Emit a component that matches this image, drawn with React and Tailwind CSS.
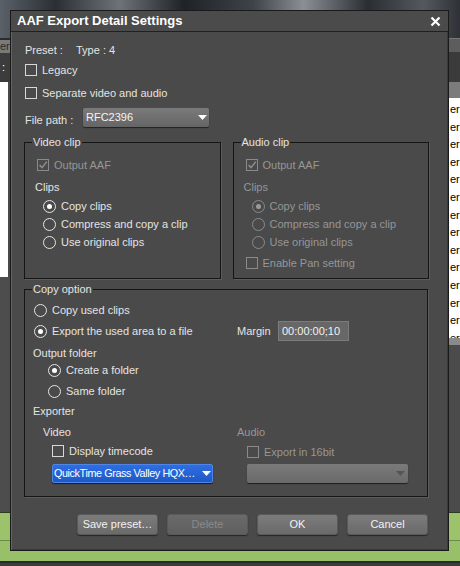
import React from 'react';

const TXT = 'text-[#e4e4e4]';
const DIM = 'text-[#969696]';

function Check({ checked, disabled }) {
  const c = disabled ? '#8e8e8e' : '#dcdcdc';
  return (
    <span
      className={`w-[12px] h-[12px] shrink-0 border flex items-center justify-center ${
        disabled ? 'border-[#8a8a8a]' : 'border-[#d8d8d8]'
      }`}
    >
      {checked && (
        <svg width="10" height="10" viewBox="0 0 10 10">
          <path d="M1.6 5 L4 7.6 L8.8 1.6" fill="none" stroke={c} strokeWidth="1.5" />
        </svg>
      )}
    </span>
  );
}

function Radio({ on, disabled }) {
  return (
    <span
      className={`w-[13px] h-[13px] shrink-0 rounded-full border flex items-center justify-center ${
        disabled ? 'border-[#8a8a8a]' : 'border-[#e6e6e6]'
      }`}
    >
      {on && <span className={`w-[5px] h-[5px] rounded-full ${disabled ? 'bg-[#9a9a9a]' : 'bg-white'}`} />}
    </span>
  );
}

function CheckRow({ label, checked, disabled, className = '' }) {
  return (
    <div className={`h-[16px] flex items-center gap-[5px] ${className}`}>
      <Check checked={checked} disabled={disabled} />
      <span className={disabled ? DIM : TXT}>{label}</span>
    </div>
  );
}

function RadioRow({ label, on, disabled, className = '' }) {
  return (
    <div className={`h-[16px] flex items-center gap-[5px] ${className}`}>
      <Radio on={on} disabled={disabled} />
      <span className={disabled ? DIM : TXT}>{label}</span>
    </div>
  );
}

function Arrow({ color = '#ffffff' }) {
  return (
    <svg width="9" height="5" viewBox="0 0 9 5" className="shrink-0">
      <path d="M0 0 H9 L4.5 5 Z" fill={color} />
    </svg>
  );
}

function Group({ title, className = '', children }) {
  return (
    <fieldset className={`border border-[#151515] shadow-[1px_1px_0_#5c5c5c] pl-[7px] ${className}`}>
      <legend className="px-[1px] leading-[14px] text-[#e4e4e4]">{title}</legend>
      {children}
    </fieldset>
  );
}

function ClipGroup({ title, disabled, pan }) {
  return (
    <Group title={title} className="w-[197px] h-[144px]">
      <CheckRow label="Output AAF" checked disabled className="mt-[8px] ml-[5px]" />
      <div className={`h-[16px] mt-[6px] ml-[3px] flex items-center ${disabled ? DIM : TXT}`}>Clips</div>
      <RadioRow label="Copy clips" on disabled={disabled} className="mt-[3px] ml-[11px]" />
      <RadioRow label="Compress and copy a clip" disabled={disabled} className="mt-[2px] ml-[11px]" />
      <RadioRow label="Use original clips" disabled={disabled} className="mt-[2px] ml-[11px]" />
      {pan && <CheckRow label="Enable Pan setting" disabled className="mt-[5px] ml-[5px]" />}
    </Group>
  );
}

function Btn({ children, disabled }) {
  return (
    <button
      className={`w-[81px] h-[21px] rounded-[3px] border border-[#5a5a5a] shadow-[0_1px_1px_#252525] ${
        disabled
          ? 'bg-[linear-gradient(#6a6a6a,#5f5f5f)] text-[#8a8a8a]'
          : 'bg-[linear-gradient(#7c7c7c,#6a6a6a)] text-[#f2f2f2]'
      }`}
    >
      {children}
    </button>
  );
}

function Dialog() {
  return (
    <div className="absolute left-[10px] top-[10px] w-[439px] h-[541px] bg-[#4a4a4a] border border-[#1a1a1a] shadow-[inset_1px_1px_0_#656565,inset_-1px_-1px_0_#3a3a3a] flex flex-col text-[11px]">
      <div className="h-[21px] shrink-0 flex items-center justify-between pl-[6px] pr-[7px] border-b border-[#202020] bg-[#4b4b4b]">
        <span className="text-white font-bold text-[13px]">AAF Export Detail Settings</span>
        <svg width="11" height="11" viewBox="0 0 11 11">
          <path d="M1.5 1.5 L9.5 9.5 M9.5 1.5 L1.5 9.5" stroke="#ffffff" strokeWidth="2.2" />
        </svg>
      </div>

      <div className="pl-[13px] pr-[19px] flex flex-col">
        <div className={`h-[16px] mt-[10px] ml-[1px] flex items-center ${TXT}`}>
          <span className="w-[51px]">Preset :</span>
          <span>Type : 4</span>
        </div>
        <CheckRow label="Legacy" className="mt-[4px] ml-[1px]" />
        <CheckRow label="Separate video and audio" className="mt-[7px] ml-[1px]" />

        <div className="h-[19px] mt-[7px] ml-[1px] flex items-center">
          <span className={`w-[58px] pt-[5px] ${TXT}`}>File path :</span>
          <div className="w-[126px] h-[19px] rounded-[2px] bg-[linear-gradient(#7a7a7a,#656565)] shadow-[0_1px_1px_#222] flex items-center justify-between pl-[3px] pr-[2px] text-[#f4f4f4]">
            <span>RFC2396</span>
            <Arrow />
          </div>
        </div>

        <div className="mt-[8px] flex gap-[12px]">
          <ClipGroup title="Video clip" />
          <ClipGroup title="Audio clip" disabled pan />
        </div>

        <Group title="Copy option" className="mt-[3px] w-[404px] h-[215px]">
          <RadioRow label="Copy used clips" className="mt-[6px] ml-[2px]" />
          <div className="h-[20px] mt-[3px] flex items-center">
            <RadioRow label="Export the used area to a file" on className="ml-[2px] w-[203px]" />
            <span className={`w-[41px] ${TXT}`}>Margin</span>
            <div className="w-[71px] h-[20px] bg-[#676767] border border-[#7c7c7c] flex items-center pl-[3px] text-[#f2f2f2]">
              00:00:00;10
            </div>
          </div>
          <div className={`h-[16px] mt-[4px] ml-[1px] flex items-center ${TXT}`}>Output folder</div>
          <RadioRow label="Create a folder" on className="mt-[1px] ml-[16px]" />
          <RadioRow label="Same folder" className="mt-[5px] ml-[16px]" />
          <div className={`h-[16px] mt-[4px] ml-[1px] flex items-center ${TXT}`}>Exporter</div>

          <div className="mt-[5px] ml-[11px] flex">
            <div className="w-[194px] flex flex-col">
              <div className={`h-[16px] flex items-center ${TXT}`}>Video</div>
              <CheckRow label="Display timecode" className="mt-[3px] ml-[9px]" />
              <div className="mt-[5px] ml-[9px] w-[161px] h-[19px] rounded-[2px] bg-[linear-gradient(#2f6ee0,#1e58c8)] border border-[#4f86e6] shadow-[0_1px_1px_#1a1a1a] flex items-center justify-between gap-[2px] pl-[1px] pr-[1px] text-white">
                <span className="whitespace-nowrap text-[10.8px] tracking-[-0.4px]">QuickTime Grass Valley HQX…</span>
                <Arrow />
              </div>
            </div>
            <div className="flex flex-col">
              <div className={`h-[16px] flex items-center ${DIM}`}>Audio</div>
              <CheckRow label="Export in 16bit" disabled className="mt-[4px] ml-[10px]" />
              <div className="mt-[4px] ml-[10px] w-[161px] h-[19px] rounded-[2px] bg-[linear-gradient(#7a7a7a,#6a6a6a)] shadow-[0_1px_1px_#1f1f1f] flex items-center justify-end pr-[3px]">
                <Arrow color="#555555" />
              </div>
            </div>
          </div>
        </Group>

        <div className="mt-[17px] flex justify-end gap-[9px] pr-[1px]">
          <Btn>Save preset…</Btn>
          <Btn disabled>Delete</Btn>
          <Btn>OK</Btn>
          <Btn>Cancel</Btn>
        </div>
      </div>
    </div>
  );
}

export default function App() {
  const rows = Array.from({ length: 14 });
  return (
    <div className="relative w-[460px] h-[566px] overflow-hidden bg-[#4a4a4a] flex flex-col font-['Liberation_Sans',Arial,sans-serif]">
      <div className="h-[38px] shrink-0 bg-[linear-gradient(90deg,#5b6169_0%,#2b2f35_12%,#6e737a_26%,#1f2226_40%,#3e434a_55%,#8b8f95_66%,#2a2d32_80%,#55595f_92%,#2e3136_100%)]" />

      <div className="flex-1 flex justify-between">
        <div className="w-[10px] flex flex-col">
          <div className="h-[2px] bg-[#2c2c2c]" />
          <div className="h-[13px] bg-[#7a7a7a] text-[11px] leading-[13px] text-[#2a2a2a]">er</div>
          <div className="h-[29px] bg-[#3c3c3c] text-[11px] text-white pl-[2px] pt-[8px] leading-[12px]">:</div>
          <div className="h-[195px] w-[8px] bg-white" />
          <div className="flex-1 bg-[#4d4d4d]" />
        </div>
        <div className="w-[11px] flex flex-col">
          <div className="h-[14px] bg-[#5d5d5d] border-t border-[#777]" />
          <div className="h-[30px] bg-[#3b3b3b]" />
          <div className="h-[16px] bg-[#7c7c7c]" />
          <div className="h-[240px] bg-white pt-[3px] flex flex-col">
            {rows.map((_, i) => (
              <div key={i} className="h-[17.6px] leading-[17.6px] text-[11px] text-black pl-[1px]">er</div>
            ))}
          </div>
          <div className="h-[7px] bg-[#8a8a8a]" />
          <div className="flex-1 bg-[#4b4b4b]" />
        </div>
      </div>

      <div className="h-[1px] bg-[#2d3a22]" />
      <div className="h-[27px] bg-[#9cc36c]" />
      <div className="h-[1px] bg-[#6c8a4c]" />
      <div className="h-[20px] bg-[#98c068]" />
      <div className="h-[2px] bg-[#2a2a2a]" />
      <div className="h-[3px] bg-[#3c3c3c]" />

      <Dialog />
    </div>
  );
}
